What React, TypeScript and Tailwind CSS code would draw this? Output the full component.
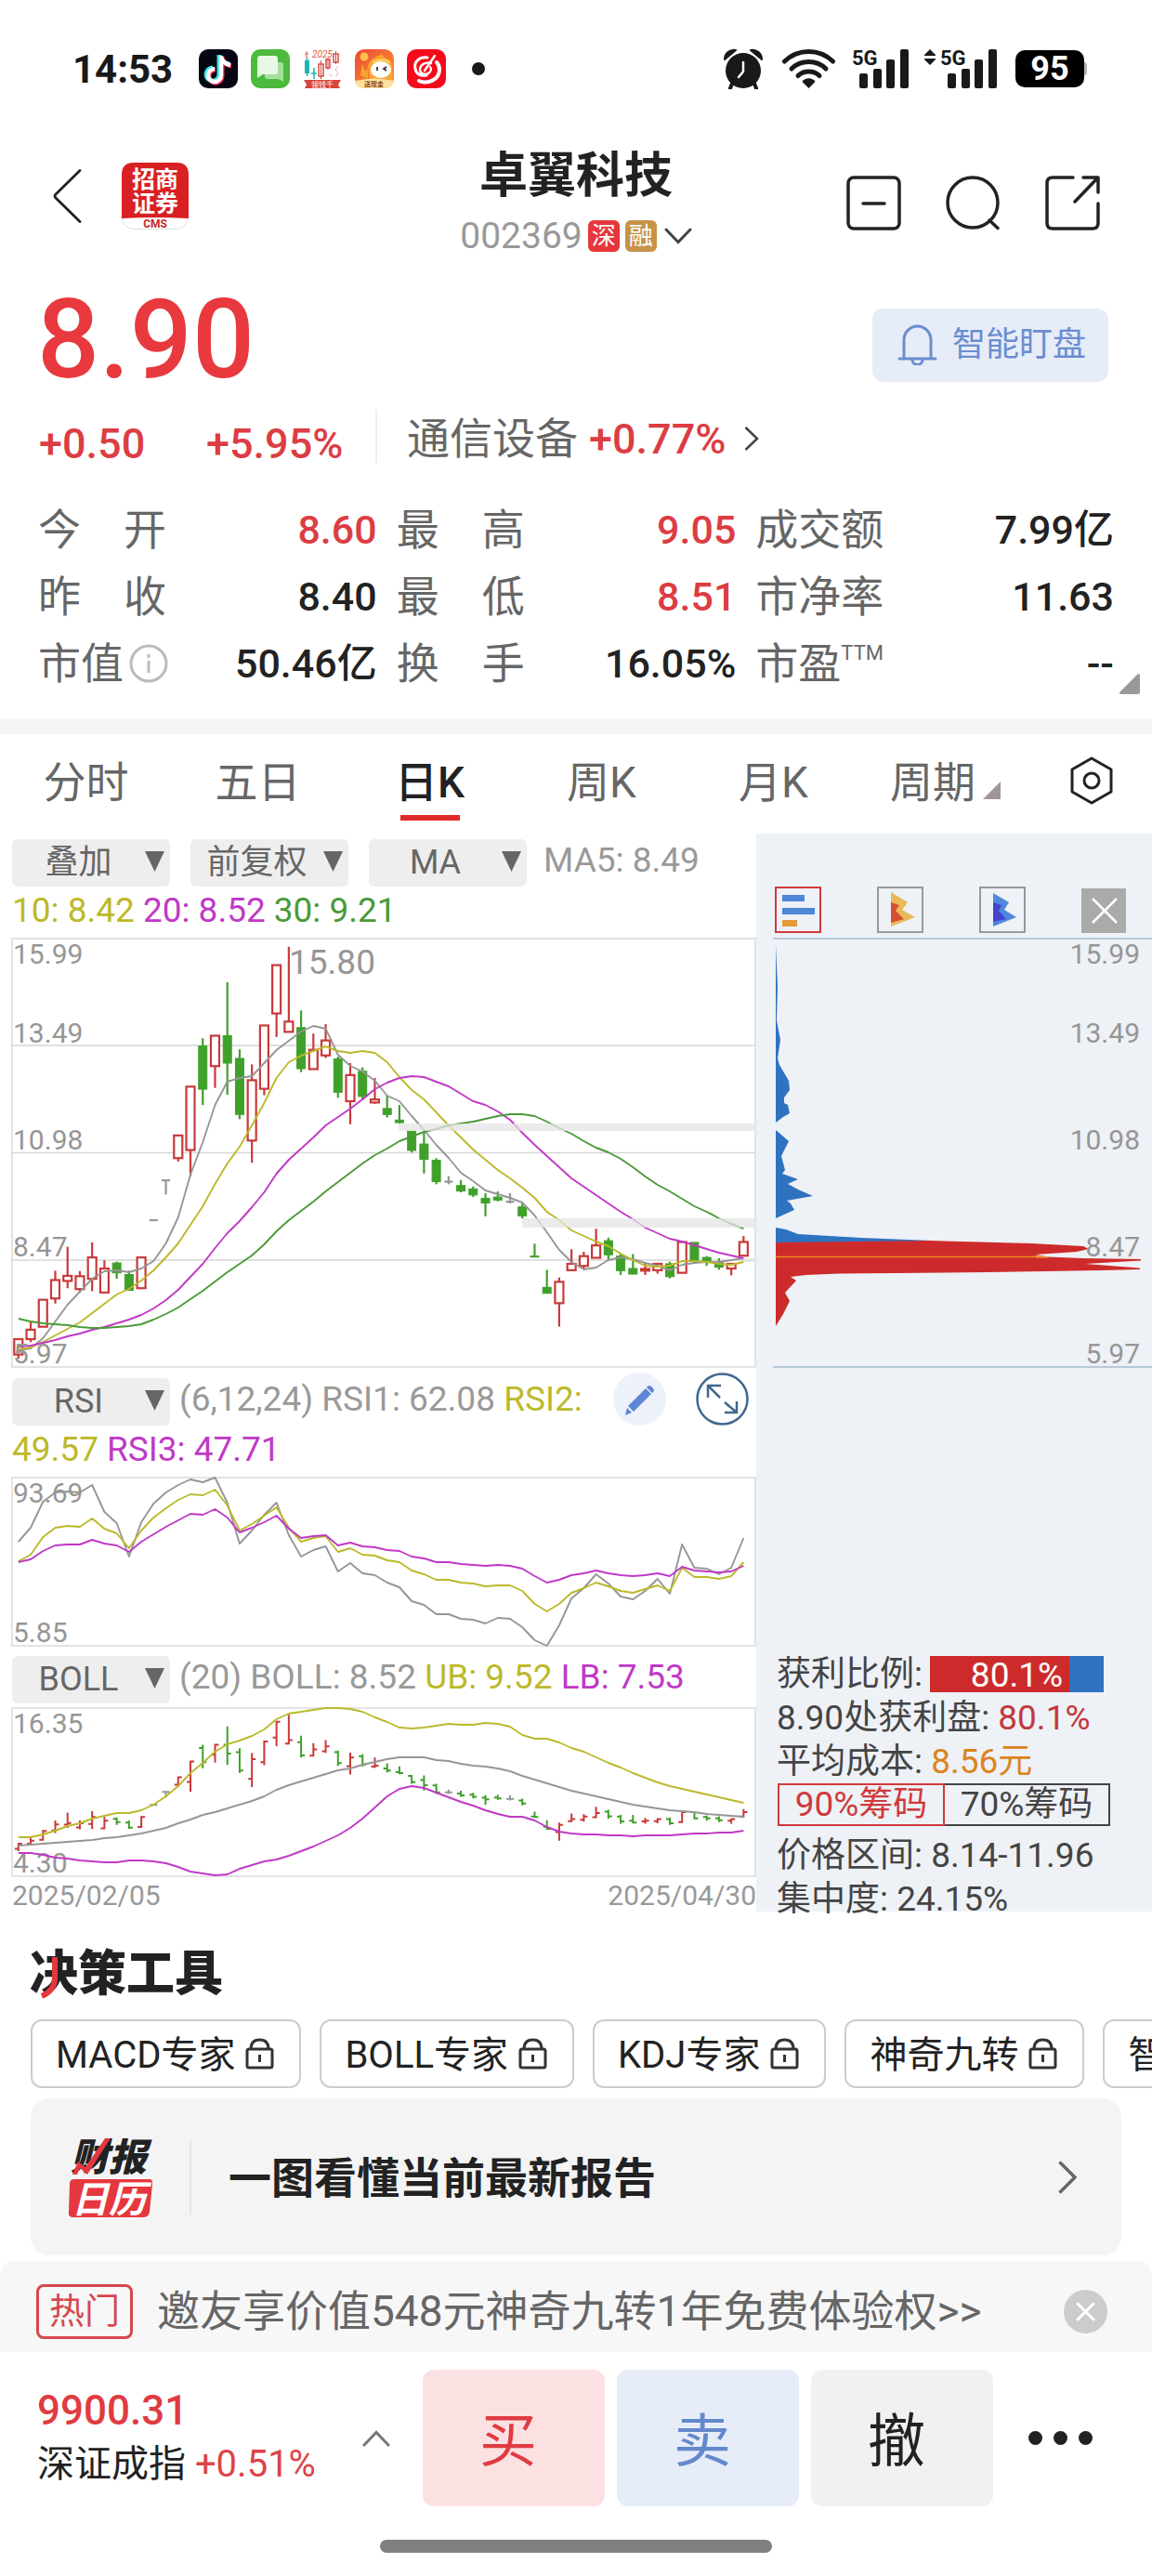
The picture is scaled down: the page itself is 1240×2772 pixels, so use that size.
import React, { useState } from 'react';
import clsx from 'clsx';

type Tone = 'up' | 'down' | 'flat';

// [open, high, low, close]
type Bar = [number, number, number, number];

const RED = '#c9393a';
const GREEN = '#3fa02a';
const GRAY = '#969696';
const YELLOW = '#bcb92b';
const PURPLE = '#c039c6';
const LINE_GREEN = '#4a9a38';

const bars: Bar[] = [
  [6.27, 6.63, 6.17, 6.63], [6.63, 7.04, 6.56, 6.85], [6.92, 7.55, 6.92, 7.55], [7.58, 8.23, 7.46, 8.01],
  [7.99, 8.79, 7.82, 8.11], [7.8, 8.22, 7.72, 8.1], [8.04, 8.89, 7.75, 8.54], [7.72, 8.47, 7.72, 8.28],
  [8.41, 8.44, 8.04, 8.18], [8.14, 8.23, 7.76, 7.77], [7.82, 8.54, 7.82, 8.54], [9.41, 9.41, 9.41, 9.41],
  [10.34, 10.34, 10.01, 10.34], [10.86, 11.39, 10.78, 11.39], [11.05, 12.53, 10.43, 12.53], [13.48, 13.66, 12.1, 12.47],
  [13.01, 13.72, 12.5, 13.72], [13.72, 14.97, 12.34, 13.08], [13.19, 13.4, 11.77, 11.88], [11.27, 13.05, 10.75, 12.68],
  [12.48, 13.96, 12.33, 13.96], [14.24, 15.37, 13.69, 15.37], [13.81, 15.8, 13.81, 14.05], [13.91, 14.31, 12.87, 12.95],
  [12.94, 13.77, 12.94, 13.39], [13.26, 13.99, 13.2, 13.61], [13.18, 13.23, 12.27, 12.4], [12.19, 13.08, 11.65, 12.8],
  [12.89, 12.98, 12.22, 12.3], [12.16, 12.73, 12.13, 12.23], [12.02, 12.32, 11.81, 11.88], [11.75, 12.1, 11.67, 11.69],
  [11.49, 11.49, 10.99, 11.04], [11.19, 11.46, 10.5, 10.83], [10.81, 10.86, 10.25, 10.31], [10.31, 10.44, 10.25, 10.31],
  [10.22, 10.35, 10.06, 10.09], [10.14, 10.2, 9.95, 10.0], [9.92, 10.04, 9.5, 9.81], [9.95, 10.08, 9.85, 9.88],
  [9.84, 10.04, 9.8, 9.84], [9.72, 9.8, 9.45, 9.51], [8.57, 8.86, 8.55, 8.55], [7.84, 8.25, 7.7, 7.7],
  [7.47, 8.07, 6.92, 7.97], [8.24, 8.73, 8.24, 8.39], [8.34, 8.67, 8.28, 8.57], [8.53, 9.21, 8.53, 8.82],
  [8.93, 9.0, 8.47, 8.6], [8.57, 8.63, 8.13, 8.23], [8.28, 8.62, 8.15, 8.15], [8.23, 8.41, 8.13, 8.27],
  [8.24, 8.39, 8.16, 8.39], [8.39, 8.44, 8.05, 8.09], [8.18, 8.9, 8.18, 8.9], [8.89, 8.89, 8.45, 8.45],
  [8.54, 8.57, 8.34, 8.44], [8.44, 8.52, 8.25, 8.31], [8.28, 8.39, 8.12, 8.39], [8.58, 9.04, 8.58, 8.9],
];

const ma5 = [443, 441, 430, 412, 394, 380, 366, 358, 357, 359, 355, 347, 328, 300, 254, 219, 179, 154, 150, 148, 134, 120, 110, 100, 94, 97, 125, 137, 143, 153, 169, 175, 191, 206, 222, 236, 252, 261, 271, 275, 279, 284, 298, 316, 335, 348, 356, 354, 346, 343, 345, 349, 352, 357, 351, 349, 348, 348, 346, 344];
const ma10 = [442, 440, 434, 427, 420, 413, 403, 393, 383, 377, 368, 357, 343, 328, 308, 288, 264, 242, 224, 201, 177, 150, 133, 126, 121, 116, 121, 123, 121, 123, 133, 149, 163, 173, 187, 201, 214, 227, 238, 249, 258, 268, 279, 294, 303, 314, 320, 326, 331, 339, 346, 352, 353, 352, 347, 347, 348, 350, 351, 348];
const ma20 = [439, 438, 435, 432, 428, 425, 421, 418, 414, 410, 405, 398, 389, 378, 364, 350, 333, 317, 304, 289, 273, 253, 238, 226, 214, 201, 192, 183, 173, 162, 155, 150, 148, 149, 154, 159, 167, 175, 179, 186, 195, 209, 222, 234, 246, 258, 267, 276, 285, 294, 302, 311, 317, 323, 326, 330, 334, 338, 341, 344];
const ma30 = [409, 412, 414, 415, 416, 418, 419, 419, 418, 417, 415, 410, 404, 397, 388, 379, 369, 359, 350, 341, 329, 315, 303, 293, 283, 272, 262, 252, 242, 233, 226, 218, 213, 208, 205, 201, 199, 197, 194, 191, 189, 189, 191, 197, 204, 210, 218, 225, 230, 237, 246, 256, 265, 272, 280, 288, 294, 301, 307, 312];

const rsi1 = [69, 54, 26, 16, 15, 16, 8, 37, 49, 85, 48, 28, 16, 8, 2, 5, 0, 27, 71, 57, 40, 27, 62, 85, 78, 74, 101, 92, 103, 105, 113, 118, 133, 137, 147, 147, 152, 153, 157, 151, 152, 161, 175, 181, 159, 130, 119, 104, 114, 128, 131, 122, 109, 125, 72, 97, 98, 104, 97, 65];
const rsi2 = [90, 83, 64, 54, 52, 53, 44, 55, 60, 76, 57, 43, 33, 24, 18, 19, 13, 30, 57, 50, 41, 32, 54, 69, 65, 63, 80, 76, 83, 84, 89, 91, 100, 104, 110, 110, 113, 114, 117, 116, 116, 122, 136, 144, 136, 124, 119, 113, 117, 122, 124, 120, 116, 122, 97, 107, 107, 109, 106, 91];
const rsi3 = [91, 88, 79, 73, 72, 72, 67, 71, 73, 80, 69, 61, 53, 46, 39, 40, 34, 43, 59, 54, 48, 41, 55, 65, 63, 62, 73, 70, 74, 75, 78, 79, 85, 87, 91, 91, 93, 94, 95, 94, 95, 98, 106, 113, 110, 105, 103, 100, 103, 105, 106, 105, 103, 106, 96, 100, 101, 102, 101, 95];

const bollUpper = [139, 139, 136, 132, 127, 124, 119, 116, 113, 113, 110, 104, 95, 84, 70, 59, 47, 39, 35, 30, 23, 12, 6, 4, 2, 0, 0, 1, 4, 10, 15, 21, 22, 21, 19, 17, 18, 18, 16, 17, 20, 29, 33, 33, 37, 43, 47, 53, 59, 64, 70, 75, 80, 84, 87, 90, 93, 96, 99, 102];
const bollMid = [148, 147, 146, 145, 144, 143, 142, 140, 139, 137, 135, 132, 129, 124, 120, 115, 112, 108, 104, 100, 95, 88, 83, 79, 75, 71, 67, 65, 61, 58, 55, 53, 53, 53, 56, 57, 60, 62, 63, 65, 68, 73, 77, 81, 85, 89, 92, 95, 98, 101, 104, 106, 108, 110, 111, 112, 114, 115, 116, 117];
const bollLower = [156, 156, 158, 161, 162, 164, 165, 166, 166, 164, 164, 165, 167, 171, 176, 178, 180, 179, 173, 169, 165, 163, 159, 154, 149, 143, 137, 129, 119, 107, 95, 87, 84, 86, 91, 96, 101, 105, 110, 114, 117, 117, 121, 128, 133, 135, 136, 136, 137, 137, 138, 137, 137, 137, 136, 135, 135, 134, 134, 132];

const TOP = 2;
const barX = (i: number) => 19.8 + i * 13.23;
const toPoints = (values: number[]) => values.map((v, i) => `${barX(i).toFixed(1)},${v + TOP}`).join(' ');

const toneOf = ([open, , , close]: Bar): Tone => (close > open ? 'up' : close < open ? 'down' : 'flat');
const toneColor: Record<Tone, string> = { up: RED, down: GREEN, flat: GRAY };

const axisLabels = [
  { text: '15.99', y: 29 },
  { text: '13.49', y: 114 },
  { text: '10.98', y: 229 },
  { text: '8.47', y: 344 },
  { text: '5.97', y: 459 },
];

const stats: { label: string; value: string; red?: boolean; info?: boolean; sup?: string }[] = [
  { label: '今　开', value: '8.60', red: true },
  { label: '最　高', value: '9.05', red: true },
  { label: '成交额', value: '7.99亿' },
  { label: '昨　收', value: '8.40' },
  { label: '最　低', value: '8.51', red: true },
  { label: '市净率', value: '11.63' },
  { label: '市值', value: '50.46亿', info: true },
  { label: '换　手', value: '16.05%' },
  { label: '市盈', value: '--', sup: 'TTM' },
];

const tabs = ['分时', '五日', '日K', '周K', '月K', '周期'];
const tools = ['MACD专家', 'BOLL专家', 'KDJ专家', '神奇九转', '智能选股'];

function Line({ values, color }: { values: number[]; color: string }) {
  return <polyline points={toPoints(values)} fill="none" stroke={color} strokeWidth="1.9" strokeLinejoin="round" />;
}

function Signal() {
  return (
    <>
      <rect x="8" y="26" width="9" height="16" rx="2" />
      <rect x="23" y="21" width="9" height="21" rx="2" />
      <rect x="37" y="11" width="9" height="31" rx="2" />
      <rect x="52" y="0" width="9" height="42" rx="2" />
      <text x="0" y="17" fontSize="22" fontWeight="700">5G</text>
    </>
  );
}

function StatusBar() {
  return (
    <div className="flex h-[148px] items-center justify-between pl-[78px] pr-[70px] text-[#191919]">
      <div className="flex items-center">
        <span className="w-[136px] text-[42px] font-bold">14:53</span>
        <div className="flex items-center gap-[14px]">
          <svg className="h-[42px] w-[42px]" viewBox="0 0 42 42">
            <rect width="42" height="42" rx="10" fill="#060613" />
            <g fill="none" strokeWidth="5">
              <path d="M22 6v21a7 7 0 1 1-7-7M22 7c1 5 5 8 11 9" stroke="#35e6e4" />
              <path d="M25 8v21a7 7 0 1 1-7-7M25 9c1 5 5 8 10 9" stroke="#f5305a" />
              <path d="M24 7v21a7 7 0 1 1-7-7M24 8c1 5 5 8 10 9" stroke="#fff" strokeWidth="4.4" />
            </g>
          </svg>
          <svg className="h-[42px] w-[42px]" viewBox="0 0 42 42">
            <rect width="42" height="42" rx="10" fill="#4cba3d" />
            <path d="M18 14h14q3 0 3 3v18l-5-3H18q-3 0-3-3V17q0-3 3-3z" fill="#a5e09c" />
            <path d="M10 7h16q3 0 3 3v14q0 3-3 3H13l-6 4V10q0-3 3-3z" fill="#e9f8e6" />
          </svg>
          <svg className="h-[42px] w-[42px] overflow-visible" viewBox="0 0 42 42">
            <path d="M4 2v7M2 5h4" stroke="#e06a60" strokeWidth="1.2" />
            <text x="10" y="9" fontSize="10" fontStyle="italic" fill="#e0603a">2025</text>
            <path d="M2 12h5v14H2z" fill="#19b8b5" />
            <path d="M4.500 9v20M12 20v12M9 26h6" stroke="#19b8b5" strokeWidth="1.6" />
            <path d="M17 16h5v13h-5zM25 11h4v9h-4zM33 5h5v9h-5z" fill="none" stroke="#d64a44" strokeWidth="1.5" />
            <path d="M19.500 12v20M27 9v13M35.500 2v14" stroke="#d64a44" />
            <path d="M38 18l-3 4 3 4-3 4M28 27l4 2" stroke="#efb3ae" fill="none" />
            <path d="M1 33h40l-3 5 2 4H2l2-4z" fill="#d8463c" />
            <text x="9" y="41" fontSize="8" fill="#fff">领钱千</text>
          </svg>
          <svg className="h-[42px] w-[42px] overflow-visible" viewBox="0 0 42 42">
            <defs>
              <linearGradient id="promo" x1="0" y1="0" x2="1" y2="1">
                <stop offset="0" stopColor="#ee4636" />
                <stop offset="1" stopColor="#f9a22f" />
              </linearGradient>
            </defs>
            <rect width="42" height="42" rx="10" fill="url(#promo)" />
            <circle cx="10" cy="8" r="4.500" fill="#fcc04a" />
            <path d="M14 18c2-8 8-9 15-13 2 6 10 4 11 13v16H16z" fill="#f9a531" />
            <path d="M6 28l2-12 3 8 3-4v12z" fill="#f9a531" />
            <ellipse cx="28" cy="22" rx="11" ry="9" fill="#fff" />
            <path d="M19 14c6-3 13-3 19 0" stroke="#fcd064" strokeWidth="2.500" fill="none" />
            <path d="M24 19v4M34 19l-3 2 3 2" stroke="#333" strokeWidth="1.8" fill="none" />
            <path d="M0 34q21-5 42 0-1 8-9 8H9q-8 0-9-8z" fill="#ffe0a0" />
            <text x="10" y="40" fontSize="7" fontWeight="700" fill="#8a4514">送现金</text>
          </svg>
          <svg className="h-[42px] w-[42px]" viewBox="0 0 42 42">
            <rect width="42" height="42" rx="10" fill="#f30b1c" />
            <g fill="none" stroke="#fff" strokeLinecap="round">
              <path d="M22 9c-8-1-15 4-13 12 1 6 6 8 12 7" strokeWidth="3" />
              <path d="M13 34c9 4 22-1 22-12 0-3-1-6-3-8" strokeWidth="4" />
              <path d="M26 15c-6-2-12 2-12 7 0 4 5 6 9 4 3-2 4-5 2-7" strokeWidth="2.400" />
              <path d="M30 7L19 23" strokeWidth="2.400" />
            </g>
          </svg>
        </div>
        <span className="ml-7 h-[14px] w-[14px] rounded-full bg-[#191919]" />
      </div>

      <div className="flex items-center">
        <svg className="h-11 w-11" viewBox="0 0 44 44" fill="#191919">
          <circle cx="22" cy="24" r="19" />
          <path d="M2 12A10 10 0 0 1 14 2zM42 12A10 10 0 0 0 30 2z" stroke="#191919" strokeWidth="2" strokeLinejoin="round" />
          <path d="M10 38l-2 5M34 38l2 5" stroke="#191919" strokeWidth="4" strokeLinecap="round" />
          <path d="M22 15v10l-5 6" stroke="#fff" strokeWidth="2.500" fill="none" strokeLinecap="round" />
        </svg>
        <svg className="ml-5 h-[42px] w-[57px]" viewBox="0 0 57 42">
          <g fill="none" stroke="#191919" strokeWidth="5" strokeLinecap="round">
            <path d="M2.500 13C17-1 40-1 54.500 13" />
            <path d="M10 21c10-10 27-10 37 0" />
            <path d="M17 28.500c6-6 17-6 23 0" />
          </g>
          <path d="M28.500 42l-7-7c3-5 11-5 14 0z" fill="#191919" />
        </svg>
        <svg className="ml-[18px] h-[42px] w-[61px] overflow-visible" viewBox="0 0 61 42" fill="#191919"><Signal /></svg>
        <svg className="ml-[17px] h-[42px] w-[78px] overflow-visible" viewBox="0 0 78 42" fill="#191919">
          <path d="M6 0l6 6v1H0V6zM6 17l6-6v-1H0v1z" />
          <g transform="translate(17 0)"><Signal /></g>
        </svg>
        <div className="ml-5 flex items-center">
          <span className="flex h-10 w-[74px] items-center justify-center rounded-[10px] bg-black text-[36px] font-bold text-white">95</span>
          <span className="h-[14px] w-[3px] rounded-r bg-[#b5b5b5]" />
        </div>
      </div>
    </div>
  );
}

function Header() {
  return (
    <header className="grid h-[140px] grid-cols-[1fr_auto_1fr] items-center px-14 text-[#222]">
      <div className="flex items-center gap-[43px] pb-[14px]">
        <button aria-label="返回">
          <svg className="h-[58px] w-8" viewBox="0 0 32 58" fill="none" stroke="#222" strokeWidth="2.800" strokeLinecap="round" strokeLinejoin="round">
            <path d="M30 1.500L4 27q-2 2 0 4l26 25.500" />
          </svg>
        </button>
        <svg className="h-[72px] w-[72px] overflow-visible" viewBox="0 0 72 72">
          <rect x=".5" y=".5" width="71" height="71" rx="13" fill="#fff" stroke="#ddd" />
          <path d="M13 0h46q13 0 13 13v47q-36-2-72 0V13Q0 0 13 0z" fill="#d92023" />
          <g fill="#fff" fontSize="25" fontWeight="700">
            <text x="11" y="27">招商</text>
            <text x="11" y="53">证券</text>
          </g>
          <text x="36" y="70" fontSize="12" fontWeight="700" textAnchor="middle" fill="#c8282b">CMS</text>
        </svg>
      </div>

      <div className="flex flex-col items-center pt-2">
        <h1 className="text-[52px] font-bold leading-[64px]">卓翼科技</h1>
        <button className="flex h-16 items-center gap-[6px]">
          <span className="text-[39px] text-[#999]">002369</span>
          <span className="flex h-[34px] w-[34px] items-center justify-center rounded-md bg-[#e6373c] text-[26px] leading-none text-white">深</span>
          <span className="flex h-[34px] w-[34px] items-center justify-center rounded-md bg-[#c69347] text-[26px] leading-none text-white">融</span>
          <svg className="ml-[2px] h-[18px] w-[30px]" viewBox="0 0 30 18" fill="none" stroke="#444" strokeWidth="3" strokeLinecap="round">
            <path d="M2 2l13 13.500L28 2" />
          </svg>
        </button>
      </div>

      <div className="flex items-center justify-end gap-12">
        <button aria-label="移除自选">
          <svg className="h-[59px] w-[59px]" viewBox="0 0 59 59" fill="none" stroke="#222" strokeWidth="3.500" strokeLinecap="round">
            <rect x="2" y="2" width="55" height="55" rx="6" />
            <path d="M18 30h23" />
          </svg>
        </button>
        <button aria-label="搜索">
          <svg className="h-[59px] w-[59px]" viewBox="0 0 59 59" fill="none" stroke="#222" strokeWidth="3.500" strokeLinecap="round">
            <circle cx="29" cy="29" r="27" />
            <path d="M47 48l9 8.500" />
          </svg>
        </button>
        <button aria-label="分享">
          <svg className="h-[59px] w-[59px]" viewBox="0 0 59 59" fill="none" stroke="#222" strokeWidth="3.500" strokeLinecap="round" strokeLinejoin="round">
            <path d="M30 2H8Q2 2 2 8v43q0 6 6 6h43q6 0 6-6V30M41 2h16v16M56 3L32 28" />
          </svg>
        </button>
      </div>
    </header>
  );
}

function Quote() {
  return (
    <section className="relative pb-6">
      <div className="flex h-[152px] items-center justify-between pl-10 pr-[47px]">
        <strong className="pt-1 text-[118px] font-medium leading-none text-[#e8393f]">8.90</strong>
        <button className="mt-[14px] flex h-[79px] w-[254px] items-center gap-4 rounded-xl bg-[#e6ecf8] pl-[27px] text-[36px] text-[#6b8dd0]">
          <svg className="h-11 w-[43px]" viewBox="0 0 43 44" fill="none" stroke="currentColor" strokeWidth="3" strokeLinecap="round">
            <path d="M2 37h39M7 36V17a14.500 15 0 0 1 29 0v19M16 38a5.500 5.500 0 0 0 11 0" />
          </svg>
          智能盯盘
        </button>
      </div>

      <div className="flex h-[60px] items-center pl-[42px] text-[45px] leading-none text-[#dc3d43]">
        <span className="w-[180px] pt-[14px] font-medium">+0.50</span>
        <span className="w-[182px] pt-[14px] font-medium">+5.95%</span>
        <button className="flex h-[58px] items-center border-l-2 border-[#eee] pl-8 pt-1">
          <span className="text-[46px] text-[#666]">通信设备</span>
          <span className="ml-3 font-medium">+0.77%</span>
          <svg className="ml-5 h-[26px] w-4" viewBox="0 0 16 26" fill="none" stroke="#444" strokeWidth="2.500">
            <path d="M1.500 1L14 13 1.500 25" />
          </svg>
        </button>
      </div>

      <dl className="mt-[34px] grid grid-cols-[365fr_366fr_386fr] gap-x-[21px] px-[41px]">
        {stats.map((item) => (
          <div key={item.label} className="flex h-[72px] items-center justify-between whitespace-nowrap">
            <dt className="flex items-center text-[46px] text-[#666]">
              {item.label}
              {item.info && (
                <svg className="ml-[6px] h-[42px] w-[42px]" viewBox="0 0 42 42" fill="none" stroke="#bbb" strokeWidth="3">
                  <circle cx="21" cy="21" r="19" />
                  <path d="M21 18v13M21 11v4" />
                </svg>
              )}
              {item.sup && <sup className="text-[22px]">{item.sup}</sup>}
            </dt>
            <dd className={clsx('pt-px text-[43px] font-medium', item.red ? 'text-[#dc3d43]' : 'text-[#222]')}>{item.value}</dd>
          </div>
        ))}
      </dl>
      <svg className="absolute bottom-[27px] right-[13px] h-[22px] w-[22px]" viewBox="0 0 22 22"><path d="M20 0q2 0 2 2v18q0 2-2 2H1q-2-1 0-3z" fill="#999" /></svg>
    </section>
  );
}

function PeriodTabs() {
  const [active, setActive] = useState('日K');
  return (
    <nav className="grid h-[107px] grid-cols-[repeat(6,185fr)_130fr] text-[46px] text-[#666]">
      {tabs.map((tab) => (
        <button key={tab} onClick={() => setActive(tab)} className="flex flex-col items-center pt-5">
          <span className={clsx('flex items-end gap-2 leading-[64px]', active === tab && 'font-medium text-[#222]')}>
            {tab}
            {tab === '周期' && (
              <svg className="mb-[14px] h-[19px] w-[19px]" viewBox="0 0 19 19"><path d="M19 0v19H0z" fill="#a09696" /></svg>
            )}
          </span>
          {active === tab && <span className="mt-[3px] h-[6px] w-16 bg-[#e02a29]" />}
        </button>
      ))}
      <button aria-label="设置" className="flex justify-center pt-6">
        <svg className="h-[52px] w-[46px]" viewBox="0 0 46 52" fill="none" stroke="#222" strokeWidth="3" strokeLinejoin="round">
          <path d="M23 2l21 12v24L23 50 2 38V14z" />
          <circle cx="23" cy="26" r="8" />
        </svg>
      </button>
    </nav>
  );
}

function Picker({ label, options }: { label: string; options: string[] }) {
  return (
    <div className="relative h-[51px] w-[170px] shrink-0">
      <select
        aria-label={label}
        className="h-full w-full appearance-none rounded-md bg-[#eee] pr-[27px] text-center text-[36px] leading-[51px] text-[#666]"
      >
        {options.map((option) => (
          <option key={option}>{option}</option>
        ))}
      </select>
      <svg className="pointer-events-none absolute right-[6px] top-4 h-[22px] w-[21px]" viewBox="0 0 21 22">
        <path d="M0 0h21L10.500 22z" fill="#666" />
      </svg>
    </div>
  );
}

function CandleChart() {
  const y = (price: number) => TOP + (15.99 - price) * 46.05;
  return (
    <svg className="block w-full overflow-visible" viewBox="0 0 814 465">
      <rect x="13" y="2" width="800" height="461" fill="none" stroke="#e3e3e3" strokeWidth="2" />
      <path d="M13 117h800M13 232.500h800M13 348h800" stroke="#d6d6d6" strokeWidth="1.500" />
      <text x="311" y="40" fontSize="37" fill={GRAY}>15.80</text>
      {bars.map((bar, i) => {
        const [open, high, low, close] = bar;
        const tone = toneOf(bar);
        const color = toneColor[tone];
        const x = barX(i);
        const top = y(Math.max(open, close));
        const bottom = y(Math.min(open, close));
        return (
          <g key={i} stroke={color} strokeWidth="2.200">
            {high > Math.max(open, close) && <path d={`M${x} ${y(high)}V${top}`} />}
            {low < Math.min(open, close) && <path d={`M${x} ${bottom}V${y(low)}`} />}
            {tone === 'flat' ? (
              <path d={`M${x - 4.5} ${top}h9`} />
            ) : (
              <rect x={x - 4.5} y={top} width="9" height={Math.max(bottom - top, 1)} fill={tone === 'up' ? '#fff' : color} strokeWidth={tone === 'up' ? 2.2 : 1} />
            )}
          </g>
        );
      })}
      <Line values={ma5} color={GRAY} />
      <Line values={ma10} color={YELLOW} />
      <Line values={ma20} color={PURPLE} />
      <Line values={ma30} color={LINE_GREEN} />
      {/* unfilled gaps */}
      <g fill="#e4e4e4" fillOpacity="0.75">
        <path d="M429 201h384v8H429zM562 303h251v10H562zM800 346h13v4h-13z" />
      </g>
      <g fontSize="30" fill={GRAY}>
        {axisLabels.map((l) => (
          <text key={l.text} x="14" y={l.y}>{l.text}</text>
        ))}
      </g>
    </svg>
  );
}

function RsiChart() {
  return (
    <svg className="block w-full overflow-visible" viewBox="0 0 814 185">
      <rect x="13" y="2" width="800" height="181" fill="none" stroke="#e3e3e3" strokeWidth="2" />
      <g fontSize="30" fill={GRAY}>
        <text x="14" y="29">93.69</text>
        <text x="14" y="179">5.85</text>
      </g>
      <Line values={rsi1} color={GRAY} />
      <Line values={rsi2} color={YELLOW} />
      <Line values={rsi3} color={PURPLE} />
    </svg>
  );
}

function BollChart() {
  const y = (price: number) => TOP + (16.35 - price) * 15.02;
  return (
    <svg className="block w-full overflow-visible" viewBox="0 0 814 185">
      <rect x="13" y="2" width="800" height="181" fill="none" stroke="#e3e3e3" strokeWidth="2" />
      <g fontSize="30" fill={GRAY}>
        <text x="14" y="29">16.35</text>
        <text x="14" y="179">4.30</text>
      </g>
      {bars.map((bar, i) => {
        const [open, high, low, close] = bar;
        const x = barX(i);
        return (
          <path
            key={i}
            d={`M${x} ${y(high) - 1}V${y(low) + 1}M${x - 4} ${y(open)}h4M${x} ${y(close)}h4`}
            stroke={toneColor[toneOf(bar)]}
            strokeWidth="2"
          />
        );
      })}
      <Line values={bollUpper} color={YELLOW} />
      <Line values={bollMid} color={GRAY} />
      <Line values={bollLower} color={PURPLE} />
    </svg>
  );
}

function ChipsPanel() {
  return (
    <div className="flex flex-col bg-[#eef1f6] text-[#444]">
      <div className="flex h-[111px] items-end justify-between pb-1 pl-5 pr-7">
        <button aria-label="筹码分布">
          <svg className="h-[50px] w-[50px]" viewBox="0 0 50 50">
            <rect x="1" y="1" width="48" height="48" fill="none" stroke="#d0393b" strokeWidth="2" />
            <path d="M8 9h24v7H8zM8 23h35v7H8z" fill="#4f86d8" />
            <path d="M8 36h16v7H8z" fill="#e59a3a" />
          </svg>
        </button>
        <button aria-label="火焰山">
          <svg className="h-[50px] w-[50px]" viewBox="0 0 50 50">
            <rect x="1" y="1" width="48" height="48" fill="none" stroke="#999" strokeWidth="2" />
            <path d="M15 6l18 11-6 8 14 8-26 10z" fill="#e9b858" />
            <path d="M15 17l9 3-4 6 9 9-14 4z" fill="#d4502f" />
          </svg>
        </button>
        <button aria-label="活跃度">
          <svg className="h-[50px] w-[50px]" viewBox="0 0 50 50">
            <rect x="1" y="1" width="48" height="48" fill="none" stroke="#999" strokeWidth="2" />
            <path d="M15 7l17 10-5 8 13 8-25 10z" fill="#4f88dc" />
            <path d="M15 17l9 3-3 6 8 9-14 3z" fill="#4643cf" />
          </svg>
        </button>
        <button aria-label="关闭">
          <svg className="h-12 w-12" viewBox="0 0 48 48">
            <rect width="48" height="48" fill="#aaa" />
            <path d="M12 11l26 26M38 11L12 37" stroke="#fff" strokeWidth="2.500" />
          </svg>
        </button>
      </div>

      <svg className="block w-full overflow-visible" viewBox="0 0 426 465">
        <path d="M18 2h408M18 463h408" stroke="#b8c9d8" strokeWidth="2" />
        <g transform="translate(0 2)">
          <g fill="#2f73c0">
            <path d="M21 7L23 52 22 88 26 109 23 129 25 136 35 153 36 163 30 171 30 177 34 179 36 188 29 192 21 198z" />
            <path d="M21 206L35 218 27 234 31 249 28 253 45 259 34 264 45 270 61 277 33 282 37 285 41 292 21 301z" />
            <path d="M21 311L32 313 45 318 113 322 188 325 188 327 21 327z" />
          </g>
          <path
            d="M21 327L188 325 296 328 352 331 358 334 345 337 301 340 314 342.500 351 344 414 345 414 346.500 354 350 413 354.500 413 356 372 357 249 359 89 360.500 53 362 37 364 43 368 31 381 36 390 29 404 21 417z"
            fill="#cd2b2b"
          />
          <path d="M21 342.500h280" stroke="#f08a22" strokeWidth="1.500" />
          <path d="M301 341l13 1.500v1h-13z" fill="#f5a52e" />
        </g>
        <g fontSize="30" fill={GRAY} textAnchor="end">
          {axisLabels.map((l) => (
            <text key={l.text} x="413" y={l.y}>{l.text}</text>
          ))}
        </g>
      </svg>

      <div className="mt-auto h-[279px] whitespace-nowrap pl-[22px] text-[37px] leading-[47px]">
        <div className="flex h-[47px] items-center">
          获利比例:
          <span className="relative ml-2 h-[39px] w-[187px] bg-[#2f73c0] text-center leading-[41px] text-white">
            <span className="absolute inset-y-0 left-0 w-[80%] bg-[#cd2b2b]" />
            <span className="relative">80.1%</span>
          </span>
        </div>
        <p>8.90处获利盘: <span className="text-[#c2393b]">80.1%</span></p>
        <p>平均成本: <span className="text-[#dc8420]">8.56元</span></p>
        <div className="mb-2 ml-[1px] flex h-[46px] w-[358px]">
          <button className="flex-1 border-2 border-[#d0393b] leading-[42px] text-[#d0393b]">90%筹码</button>
          <button className="flex-1 border-2 border-l-0 border-[#444] leading-[42px]">70%筹码</button>
        </div>
        <p>价格区间: 8.14-11.96</p>
        <p>集中度: 24.15%</p>
      </div>
    </div>
  );
}

function ChartArea() {
  return (
    <section className="grid grid-cols-[814fr_426fr]">
      <div className="min-w-0 whitespace-nowrap text-[37px] text-[#999]">
        <div className="flex h-[54px] items-end gap-[22px] pl-[13px]">
          <Picker label="叠加" options={['叠加']} />
          <Picker label="复权" options={['前复权', '后复权', '不复权']} />
          <Picker label="主图指标" options={['MA', 'BOLL']} />
          <span className="-ml-1 leading-[51px]">MA5: 8.49</span>
        </div>
        <div className="flex h-[57px] items-center gap-[9px] pl-[13px]">
          <span className="text-[#bcb92b]">10: 8.42</span>
          <span className="text-[#c039c6]">20: 8.52</span>
          <span className="text-[#4a9a38]">30: 9.21</span>
        </div>
        <CandleChart />

        <div className="flex h-[58px] items-end gap-[10px] pl-[13px]">
          <Picker label="副图指标一" options={['RSI', 'MACD', 'KDJ']} />
          <span className="leading-[51px]">(6,12,24) RSI1: 62.08 <span className="text-[#bcb92b]">RSI2:</span></span>
          <div className="-mb-[3px] ml-auto flex gap-8 pr-2">
            <button aria-label="编辑指标" className="flex h-[57px] w-[57px] items-center justify-center rounded-full bg-[#ecf1fa]">
              <svg className="h-9 w-9" viewBox="0 0 36 36" fill="#5f86d6">
                <path d="M24 6l6 6L11 31l-6-6zM26 4q2-2 4 0l2 2q2 2 0 4l-1 1-6-6zM4 27l5 5-7 3z" />
              </svg>
            </button>
            <button aria-label="全屏">
              <svg className="h-[57px] w-[57px]" viewBox="0 0 57 57" fill="none" stroke="#3f678e" strokeWidth="2.500">
                <circle cx="28.500" cy="28.500" r="27" />
                <path d="M13 27V14h14M13 14l13 13M44 31v12H31M44 43L31 32" />
              </svg>
            </button>
          </div>
        </div>
        <div className="flex h-[57px] items-center gap-[9px] pl-[13px]">
          <span className="text-[#bcb92b]">49.57</span>
          <span className="text-[#c039c6]">RSI3: 47.71</span>
        </div>
        <RsiChart />

        <div className="flex h-[63px] items-center gap-[10px] pl-[13px]">
          <Picker label="副图指标二" options={['BOLL', 'RSI', 'MACD']} />
          <span>(20) BOLL: 8.52 <span className="text-[#bcb92b]">UB: 9.52</span> <span className="text-[#c039c6]">LB: 7.53</span></span>
        </div>
        <BollChart />
        <div className="flex h-9 items-center justify-between pl-[13px] text-[30px]">
          <time>2025/02/05</time>
          <time>2025/04/30</time>
        </div>
      </div>
      <ChipsPanel />
    </section>
  );
}

function DecisionTools() {
  return (
    <section>
      <h2 className="ml-8 mt-8 h-[84px] text-[52px] font-black leading-[72px] text-[#222]">
        <span className="relative">
          决
          <svg className="absolute left-[9px] top-[12px] h-[46px] w-[24px]" viewBox="0 0 24 46" fill="none" stroke="#e5383e" strokeWidth="6">
            <path d="M18 0v22q0 14-14 20" />
          </svg>
        </span>
        策工具
      </h2>
      <div className="flex gap-5 overflow-hidden pl-[33px]">
        {tools.map((tool) => (
          <button key={tool} className="flex h-[74px] shrink-0 items-center gap-2 rounded-xl border-2 border-[#ccc] px-[25px] pt-1 text-[40px] text-[#222]">
            {tool}
            <svg className="mb-1 h-9 w-9" viewBox="0 0 36 36" fill="none" stroke="#333" strokeWidth="3">
              <rect x="5" y="13" width="27" height="20" rx="2" />
              <path d="M9 13q0-10 9.500-10T28 13M18.500 19v8" />
            </svg>
          </button>
        ))}
      </div>

      <a href="#report" className="mx-[33px] mt-[11px] flex h-[169px] items-center rounded-[20px] bg-[#f4f4f4] text-[#222]">
        <svg className="ml-[38px] h-[88px] w-24 overflow-visible" viewBox="0 0 96 88">
          <text x="5" y="37" fontSize="41" fontWeight="900" fontStyle="italic" fill="#222">财报</text>
          <path d="M7 41l6-14 8 6L42 2h6L23 41l-8-7-3 7z" fill="#e5383e" />
          <path d="M9 46h80q5 0 4 5l-3 30q-1 6-7 6H8q-6 0-5-6l1-30q0-5 5-5z" fill="#e5383e" />
          <text x="6" y="82" fontSize="40" fontWeight="700" fontStyle="italic" fill="#fff">日历</text>
        </svg>
        <span className="ml-[37px] h-20 border-l-2 border-[#e5e5e5]" />
        <span className="ml-10 pt-1 text-[46px] font-bold">一图看懂当前最新报告</span>
        <svg className="ml-auto mr-12 h-9 w-5" viewBox="0 0 20 36" fill="none" stroke="#666" strokeWidth="3.500">
          <path d="M1.500 1.500L18 18 1.500 34.500" />
        </svg>
      </a>
    </section>
  );
}

function Notice() {
  return (
    <div className="mt-[6px] flex h-[98px] items-center rounded-t-2xl bg-[#f7f7f7] pl-[39px] pr-12 pt-[10px]">
      <span className="flex h-[59px] w-[104px] items-center justify-center rounded-lg border-3 border-[#d5484d] text-[38px] text-[#d5484d]">热门</span>
      <a href="#invite" className="ml-[26px] whitespace-nowrap text-[46px] text-[#666]">邀友享价值548元神奇九转1年免费体验权&gt;&gt;</a>
      <button aria-label="关闭" className="ml-auto">
        <svg className="h-[47px] w-[47px]" viewBox="0 0 47 47">
          <circle cx="23.500" cy="23.500" r="23.500" fill="#ccc" />
          <path d="M15 15l17 17M32 15L15 32" stroke="#fff" strokeWidth="3" strokeLinecap="round" />
        </svg>
      </button>
    </div>
  );
}

function TradeBar() {
  return (
    <footer className="flex h-[241px] flex-col">
      <div className="flex items-center pl-10 pr-16 pt-[19px]">
        <div className="min-w-0 flex-1 whitespace-nowrap pb-1">
          <div className="text-[44px] font-medium leading-[60px] text-[#e03b41]">9900.31</div>
          <div className="text-[40px] leading-[56px] text-[#222]">
            深证成指 <span className="text-[#dc4449]">+0.51%</span>
          </div>
        </div>
        <button aria-label="展开">
          <svg className="h-[18px] w-[30px]" viewBox="0 0 30 18" fill="none" stroke="#777" strokeWidth="3">
            <path d="M1 17L15 2.500 29 17" />
          </svg>
        </button>
        <div className="ml-[35px] flex gap-[13px] text-[62px]">
          <button className="h-[147px] w-[196px] rounded-xl bg-[#fce1e3] pr-3 pt-2 text-[#e03b41]">买</button>
          <button className="h-[147px] w-[196px] rounded-xl bg-[#e6ecf8] pr-3 pt-2 text-[#6388cc]">卖</button>
          <button className="h-[147px] w-[196px] rounded-xl bg-[#f1f1f1] pr-3 pt-2 text-[#222]">撤</button>
        </div>
        <button aria-label="更多" className="ml-[38px] flex gap-3">
          <span className="h-[15px] w-[15px] rounded-full bg-[#222]" />
          <span className="h-[15px] w-[15px] rounded-full bg-[#222]" />
          <span className="h-[15px] w-[15px] rounded-full bg-[#222]" />
        </button>
      </div>
      <div className="mx-auto mt-9 h-[14px] w-[34%] rounded-full bg-[#808080]" />
    </footer>
  );
}

export default function App() {
  return (
    <main className="overflow-hidden bg-white font-['Roboto','Noto_Sans_CJK_SC',sans-serif]">
      <StatusBar />
      <Header />
      <Quote />
      <div className="h-4 bg-[#f4f4f4]" />
      <PeriodTabs />
      <ChartArea />
      <DecisionTools />
      <Notice />
      <TradeBar />
    </main>
  );
}
